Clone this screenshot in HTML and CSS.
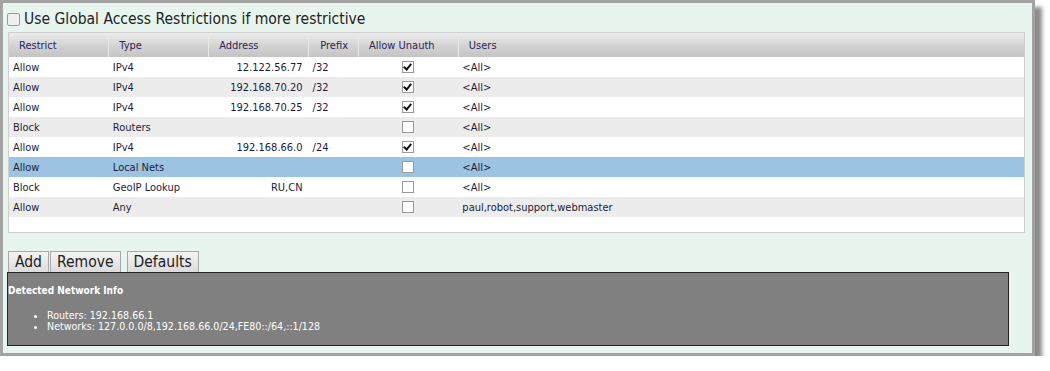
FILE: index.html
```html
<!DOCTYPE html>
<html lang="en">
<head>
    <meta charset="UTF-8">
    <title>Access Restrictions</title>
    <link rel="stylesheet" href="styles.css">
</head>
<body>
    <div class="frame">
        <!-- Global option -->
        <label class="global-opt">
            <span class="cb cb-big"></span>
            Use Global Access Restrictions if more restrictive
        </label>

        <!-- Restrictions grid -->
        <div class="grid">
            <table>
                <thead>
                    <tr>
                        <th class="c-restrict">Restrict</th>
                        <th class="c-type">Type</th>
                        <th class="c-addr">Address</th>
                        <th class="c-prefix">Prefix</th>
                        <th class="c-unauth">Allow Unauth</th>
                        <th class="c-users">Users</th>
                    </tr>
                </thead>
                <tbody>
                    <tr>
                        <td>Allow</td><td>IPv4</td><td class="addr">12.122.56.77</td><td>/32</td>
                        <td class="center"><span class="cb checked"></span></td><td>&lt;All&gt;</td>
                    </tr>
                    <tr class="alt">
                        <td>Allow</td><td>IPv4</td><td class="addr">192.168.70.20</td><td>/32</td>
                        <td class="center"><span class="cb checked"></span></td><td>&lt;All&gt;</td>
                    </tr>
                    <tr>
                        <td>Allow</td><td>IPv4</td><td class="addr">192.168.70.25</td><td>/32</td>
                        <td class="center"><span class="cb checked"></span></td><td>&lt;All&gt;</td>
                    </tr>
                    <tr class="alt">
                        <td>Block</td><td>Routers</td><td class="addr"></td><td></td>
                        <td class="center"><span class="cb"></span></td><td>&lt;All&gt;</td>
                    </tr>
                    <tr>
                        <td>Allow</td><td>IPv4</td><td class="addr">192.168.66.0</td><td>/24</td>
                        <td class="center"><span class="cb checked"></span></td><td>&lt;All&gt;</td>
                    </tr>
                    <tr class="selected">
                        <td>Allow</td><td>Local Nets</td><td class="addr"></td><td></td>
                        <td class="center"><span class="cb"></span></td><td>&lt;All&gt;</td>
                    </tr>
                    <tr>
                        <td>Block</td><td>GeoIP Lookup</td><td class="addr">RU,CN</td><td></td>
                        <td class="center"><span class="cb"></span></td><td>&lt;All&gt;</td>
                    </tr>
                    <tr class="alt">
                        <td>Allow</td><td>Any</td><td class="addr"></td><td></td>
                        <td class="center"><span class="cb"></span></td><td>paul,robot,support,webmaster</td>
                    </tr>
                </tbody>
            </table>
        </div>

        <div class="buttons">
            <button>Add</button>
            <button>Remove</button>
            <button class="gap">Defaults</button>
        </div>

        <!-- Network info -->
        <div class="netinfo">
            <h4>Detected Network Info</h4>
            <ul>
                <li>Routers: 192.168.66.1</li>
                <li>Networks: 127.0.0.0/8,192.168.66.0/24,FE80::/64,::1/128</li>
            </ul>
        </div>
    </div>
</body>
</html>
```

FILE: styles.css
```css
body {
    margin: 0;
    background: white;
    font-family: "DejaVu Sans Condensed", "DejaVu Sans", sans-serif;
}

.frame {
    width: 1019px;
    height: 340px;
    border: 3px solid #a3a3a3;
    background-color: #e7f5ee;
    padding: 7px 5px 3px 5px;
    box-shadow: 7px 7px 4px rgba(0, 0, 0, 0.45);
}

.global-opt {
    display: flex;
    align-items: center;
    gap: 4px;
    height: 18px;
    font-size: 15.5px;
    color: #222;
    margin-left: -1px;
    margin-bottom: 4px;
}

.cb {
    display: inline-block;
    box-sizing: border-box;
    width: 12px;
    height: 12px;
    border: 1px solid #9a9a9a;
    background: white;
    position: relative;
}

.cb-big {
    width: 13px;
    height: 13px;
    border-radius: 2px;
    background: #f0f0f0;
}

.cb.checked::after {
    content: "";
    position: absolute;
    left: 2px;
    top: 0px;
    width: 3px;
    height: 6px;
    border: solid #111;
    border-width: 0 2px 2px 0;
    transform: rotate(40deg);
}

.grid {
    width: 1015px;
    height: 199px;
    border: 1px solid #cfcfcf;
    background: white;
}

table {
    border-collapse: collapse;
    font-size: 11px;
    color: #1c1c3a;
}

th {
    height: 24px;
    padding: 0 0 0 10px;
    text-align: left;
    font-weight: normal;
    color: #2b2355;
    background: linear-gradient(#ececec, #d2d2d2 55%, #c4c4c4);
    border-right: 1px solid #e8e8e8;
    box-sizing: border-box;
}

.c-restrict,
.c-type,
.c-addr,
.c-unauth {
    width: 100px;
}

.c-prefix {
    width: 50px;
    text-align: right;
    padding-right: 10px;
}

.c-users {
    width: 567px;
    border-right: none;
}

td {
    height: 20px;
    padding: 0 4px;
    box-sizing: border-box;
}

td.addr {
    text-align: right;
    padding-right: 6px;
}

td.center {
    text-align: center;
    line-height: 0;
}

tr.alt td {
    background: #ececec;
}

tr.selected td {
    background: #9dc3e3;
}

.buttons {
    display: flex;
    margin-top: 18px;
    height: 21px;
}

button {
    font-family: "DejaVu Sans Condensed", "DejaVu Sans", sans-serif;
    font-size: 15.5px;
    color: #222;
    padding: 0 6px;
    margin-right: 1px;
    border: 1px solid #a8a8a8;
    border-bottom: none;
    background: linear-gradient(#f4f4f4, #dcdcdc);
}

button.gap {
    margin-left: 5px;
}

.netinfo {
    width: 1000px;
    height: 72px;
    margin-left: -1px;
    border: 1px solid #222;
    background: #808080;
    color: white;
    font-size: 10.6px;
}

.netinfo h4 {
    margin: 12px 0 0 0;
    font-size: 10px;
}

.netinfo ul {
    margin: 14px 0 0 0;
    padding-left: 39px;
    line-height: 11px;
}
```
